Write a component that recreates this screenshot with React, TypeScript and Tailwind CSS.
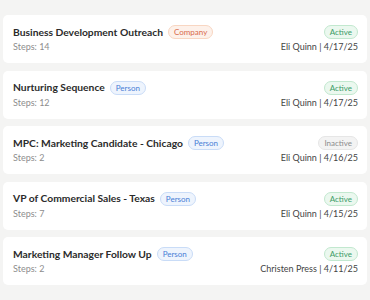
import React from "react";

type Item = {
  title: string;
  type: "Company" | "Person";
  steps: number;
  status: "Active" | "Inactive";
  owner: string;
  date: string;
};

const items: Item[] = [
  { title: "Business Development Outreach", type: "Company", steps: 14, status: "Active", owner: "Eli Quinn", date: "4/17/25" },
  { title: "Nurturing Sequence", type: "Person", steps: 12, status: "Active", owner: "Eli Quinn", date: "4/17/25" },
  { title: "MPC: Marketing Candidate - Chicago", type: "Person", steps: 2, status: "Inactive", owner: "Eli Quinn", date: "4/16/25" },
  { title: "VP of Commercial Sales - Texas", type: "Person", steps: 7, status: "Active", owner: "Eli Quinn", date: "4/15/25" },
  { title: "Marketing Manager Follow Up", type: "Person", steps: 2, status: "Active", owner: "Christen Press", date: "4/11/25" },
];

function TypeBadge({ type }: { type: Item["type"] }) {
  if (type === "Company") {
    return (
      <span className="inline-flex h-[14px] items-center rounded-full border border-[#f8d6c2] bg-[#fdf1ea] px-[5px] text-[8px] leading-none text-[#d86a4c]">
        Company
      </span>
    );
  }
  return (
    <span className="inline-flex h-[14px] items-center rounded-full border border-[#c9dcf7] bg-[#eef4fd] px-[5px] text-[8px] leading-none text-[#4a7fd6]">
      Person
    </span>
  );
}

function StatusBadge({ status }: { status: Item["status"] }) {
  if (status === "Active") {
    return (
      <span className="inline-flex h-[14px] items-center rounded-full border border-[#c2e8cf] bg-[#ebf8ef] px-[5px] text-[8px] leading-none text-[#3b9c68]">
        Active
      </span>
    );
  }
  return (
    <span className="inline-flex h-[14px] items-center rounded-full border border-[#e6e6e6] bg-[#f3f3f3] px-[5px] text-[8px] leading-none text-[#8c8c8c]">
      Inactive
    </span>
  );
}

export default function App() {
  return (
    <div
      className="min-h-[300px] w-[370px] bg-[#f4f4f3] px-[3px] pt-[15px]"
      style={{ fontFamily: "Lato, 'Noto Sans', sans-serif" }}
    >
      <div className="flex flex-col gap-[7.5px]">
        {items.map((it) => (
          <div key={it.title} className="flex h-[48px] flex-col justify-center rounded-[5px] bg-white pl-[10px] pr-[9px]">
            <div className="flex items-center justify-between">
              <div className="flex items-center gap-[5px]">
                <span className="text-[10.3px] font-bold leading-none text-[#2b2b2b]">{it.title}</span>
                <TypeBadge type={it.type} />
              </div>
              <StatusBadge status={it.status} />
            </div>
            <div className="mt-[2px] flex items-center justify-between">
              <span className="text-[9px] leading-[12px] text-[#8d8d8d]">Steps: {it.steps}</span>
              <span className="text-[9px] leading-[12px] text-[#444444]">
                {it.owner} | {it.date}
              </span>
            </div>
          </div>
        ))}
      </div>
    </div>
  );
}
